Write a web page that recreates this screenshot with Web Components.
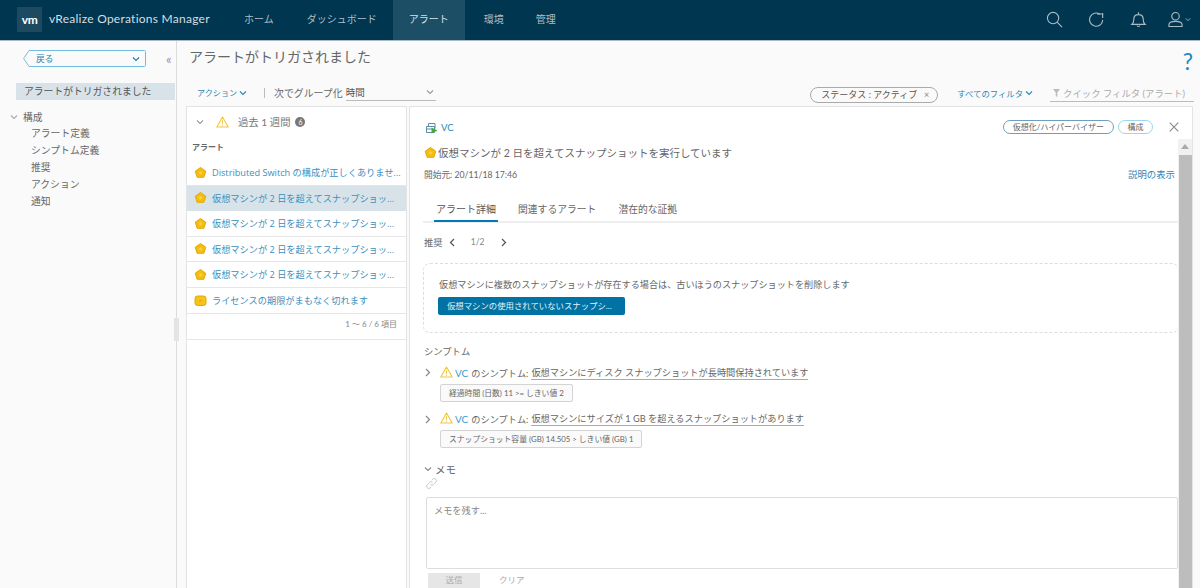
<!DOCTYPE html>
<html lang="ja">
<head>
<meta charset="utf-8">
<title>vRealize Operations Manager</title>
<style>
  html, body { margin: 0; height: 588px; overflow: hidden; }
  body {
    font-family: "Lato", "Noto Sans CJK JP", sans-serif;
    color: #666;
    background: #fafafa;
    display: flex;
    flex-direction: column;
    width: 1200px;
  }
  .page { display: flex; flex: 1; min-height: 0; }
</style>
</head>
<body>
<app-header></app-header>
<div class="page">
  <app-sidebar></app-sidebar>
  <app-main></app-main>
</div>

<script>
const ICONS = {
  star: `<svg width="13" height="13" viewBox="0 0 13 13"><path d="M6.5 1.500 11.800 5.300 9.800 11.300H3.200L1.200 5.300z" fill="#f5bd12" stroke="#e3a900" stroke-width="1" stroke-linejoin="round"/><circle cx="6.500" cy="6.800" r="1.600" fill="#fad447"/></svg>`,
  square: `<svg width="13" height="13" viewBox="0 0 13 13"><rect x="1" y="2" width="11" height="9.500" rx="2.500" fill="#f6c21c" stroke="#e5a800"/><rect x="5.400" y="6.200" width="2" height="1" fill="#d59a00"/></svg>`,
  warn: `<svg width="13" height="12" viewBox="0 0 13 12"><path d="M6.500 1 12.200 11H.8z" fill="#fff" stroke="#f3c53c" stroke-width="1.100" stroke-linejoin="round"/><path d="M6.500 4.200v3.600M6.500 8.800v1" stroke="#f3c53c" stroke-width="1"/></svg>`,
  chevDown: `<svg width="8" height="6" viewBox="0 0 8 6"><path d="M1 1.500 4 4.500 7 1.500" fill="none" stroke="currentColor" stroke-width="1.100"/></svg>`,
  chevRight: `<svg width="6" height="9" viewBox="0 0 6 9"><path d="M1 1l3.500 3.500L1 8" fill="none" stroke="currentColor" stroke-width="1.200"/></svg>`,
  chevLeft: `<svg width="6" height="9" viewBox="0 0 6 9"><path d="M5 1 1.500 4.500 5 8" fill="none" stroke="currentColor" stroke-width="1.200"/></svg>`
};

class AppHeader extends HTMLElement {
  connectedCallback() {
    this.attachShadow({ mode: 'open' }).innerHTML = `
    <style>
      :host { display: flex; height: 40px; background: #00364f; border-bottom: 1px solid #a9bcc6; box-sizing: content-box; align-items: stretch; color: #a9bcc6; flex: none; }
      .logo { width: 25px; height: 25px; margin: 7px 7px 0 17px; background: #1d4a60; color: #fff; font: 700 12px "Lato", sans-serif; display: flex; align-items: center; justify-content: center; letter-spacing: -.5px; }
      .name { width: 178px; font-size: 12px; letter-spacing: .25px; color: #d6dfe4; line-height: 37px; white-space: nowrap; }
      nav { display: flex; }
      nav a { font-size: 10px; padding: 0 16px; line-height: 39px; color: #aebfc8; white-space: nowrap; }
      nav a.on { background: #1c4f66; color: #d9e2e7; }
      nav a:first-child { padding-left: 0; padding-right: 17px; margin-left: 17px; }
      nav a:nth-child(3) { margin: 0 3px 0 0; }
      .tools { margin-left: auto; display: flex; align-items: center; gap: 25px; padding: 0 9px 2px 0; }
      svg { display: block; fill: none; stroke: currentColor; stroke-width: 1.200; }
      .bell { margin-right: -4px; }
      .user { display: flex; align-items: center; gap: 2px; }
    </style>
    <div class="logo">vm</div>
    <div class="name">vRealize Operations Manager</div>
    <nav><a>ホーム</a><a>ダッシュボード</a><a class="on">アラート</a><a>環境</a><a>管理</a></nav>
    <div class="tools">
      <svg width="17" height="17" viewBox="0 0 18 18"><circle cx="7.500" cy="7.500" r="6"/><path d="M12 12l5 5"/></svg>
      <svg width="17" height="17" viewBox="0 0 18 18"><path d="M15.600 9.500A7 7 0 1 1 12.600 3.400"/><path d="M9.500 3.200h6V2M15.500 2v5.400"/></svg>
      <svg class="bell" width="17" height="17" viewBox="0 0 18 18"><path d="M2 14.200c1.600-1.300 2-2.600 2-5.200 0-3 2-5.200 5-5.200s5 2.200 5 5.200c0 2.600.4 3.900 2 5.200zM9 1.200v2.400M7.600 15.400c.2 1.400 2.600 1.400 2.800 0"/></svg>
      <div class="user">
        <svg width="15" height="17" viewBox="0 0 16 18"><circle cx="8" cy="5.500" r="4"/><path d="M1 16.500v-2c0-2.200 3-3.500 7-3.500s7 1.300 7 3.500v2z"/></svg>
        <svg width="6" height="5" viewBox="0 0 8 6"><path d="M1 1.500 4 4.500 7 1.500"/></svg>
      </div>
    </div>`;
  }
}

class AppSidebar extends HTMLElement {
  connectedCallback() {
    this.attachShadow({ mode: 'open' }).innerHTML = `
    <style>
      :host { display: block; position: relative; width: 176px; flex: none; border-right: 1px solid #dcdcdc; background: #fafafa; font-size: 9.800px; color: #666; }
      .top { display: flex; align-items: center; margin: 9px 0 0 23px; }
      .back { position: relative; width: 123px; height: 17px; display: flex; align-items: center; justify-content: space-between; padding: 0 6px 0 13px; box-sizing: border-box; font-size: 8.700px; color: #1f7fb0; }
      .back > svg:first-child { position: absolute; left: 0; top: 0; color: #74bbe0; }
      .back svg { color: #1f7fb0; }
      .collapse { margin-left: 20px; color: #999; font-size: 13px; line-height: 14px; }
      .current { margin: 16px 1px 0 16px; height: 17px; line-height: 17px; padding-left: 8px; background: #d8e3e9; color: #555; white-space: nowrap; }
      .group { display: flex; align-items: center; height: 17px; margin-top: 8px; }
      .group svg { margin: 0 5px 0 10px; color: #aaa; }
      .sub { padding-left: 31px; line-height: 17px; }
      .grip { position: absolute; right: -3px; top: 277px; width: 5px; height: 23px; background: #e4e4e4; }
    </style>
    <div class="top">
      <div class="back">
        <svg width="123" height="17" viewBox="0 0 123 17" fill="none" stroke="currentColor"><path d="M.6 8.500 6 .5h115.500a1 1 0 0 1 1 1v14a1 1 0 0 1-1 1H6z"/></svg>
        <span>戻る</span>${ICONS.chevDown}
      </div>
      <div class="collapse">«</div>
    </div>
    <div class="current">アラートがトリガされました</div>
    <div class="group">${ICONS.chevDown}<span>構成</span></div>
    <div class="sub">アラート定義</div>
    <div class="sub">シンプトム定義</div>
    <div class="sub">推奨</div>
    <div class="sub">アクション</div>
    <div class="sub">通知</div>
    <div class="grip"></div>`;
  }
}

class AppMain extends HTMLElement {
  connectedCallback() {
    this.attachShadow({ mode: 'open' }).innerHTML = `
    <style>
      :host { display: flex; flex-direction: column; flex: 1; min-width: 0; }
      .title { display: flex; justify-content: space-between; padding: 6px 7px 0 12px; height: 29px; font-size: 14px; color: #666; box-sizing: border-box; line-height: 20px; flex: none; }
      .help { font-size: 23px; color: #1f87c0; line-height: 22px; margin-top: 3px; }
      .panels { display: flex; gap: 2px; padding: 0 7px 0 9px; flex: 1; min-height: 0; }
    </style>
    <div class="title"><span>アラートがトリガされました</span><span class="help">?</span></div>
    <alert-toolbar></alert-toolbar>
    <div class="panels">
      <alert-list></alert-list>
      <alert-detail></alert-detail>
    </div>`;
  }
}

class AlertToolbar extends HTMLElement {
  connectedCallback() {
    this.attachShadow({ mode: 'open' }).innerHTML = `
    <style>
      :host { display: flex; align-items: center; height: 36px; padding: 9px 6px 0 20px; box-sizing: border-box; font-size: 9.500px; color: #666; flex: none; white-space: nowrap; }
      .link { color: #2f86b5; font-size: 8.100px; display: flex; align-items: center; gap: 2px; }
      .sep { width: 1px; height: 10px; background: #bbb; margin: 0 9px 0 17px; }
      .group { font-size: 9.900px; }
      .select { width: 90px; height: 17px; margin-left: 3px; box-sizing: border-box; border-bottom: 1px solid #bbb; display: flex; justify-content: space-between; align-items: center; padding-right: 2px; font-size: 9.500px; color: #555; }
      .select svg { color: #999; }
      .pill { margin: 4px 0 0 auto; width: 128px; height: 16px; box-sizing: border-box; border: 1px solid #aaa; border-radius: 8px; display: flex; justify-content: space-between; align-items: center; padding: 0 8px 0 10px; font-size: 9px; color: #555; }
      .pill i { font-style: normal; color: #888; font-size: 9px; }
      .all { margin: 1px 17px 0 19px; font-size: 8.350px; }
      .quick { margin-top: 2px; width: 144px; height: 17px; box-sizing: border-box; border-bottom: 1px solid #bbb; color: #aaa; font-size: 9.400px; display: flex; align-items: center; gap: 3px; padding-left: 3px; }
    </style>
    <span class="link">アクション ${ICONS.chevDown}</span>
    <span class="sep"></span>
    <span class="group">次でグループ化</span>
    <div class="select"><span>時間</span>${ICONS.chevDown}</div>
    <div class="pill"><span>ステータス : アクティブ</span><i>×</i></div>
    <span class="link all">すべてのフィルタ ${ICONS.chevDown}</span>
    <div class="quick"><svg width="7" height="8" viewBox="0 0 7 8"><path d="M0 0h7L4.300 3.500V8L2.700 7V3.500z" fill="#bbb"/></svg><span>クイック フィルタ (アラート)</span></div>`;
  }
}

class AlertRow extends HTMLElement {
  connectedCallback() {
    const icon = this.getAttribute('icon') || 'star';
    this.attachShadow({ mode: 'open' }).innerHTML = `
    <style>
      :host { display: flex; align-items: center; height: 25.500px; box-sizing: border-box; border-bottom: 1px solid #e6e6e6; padding: 0 4px 0 7px; gap: 5px; font-family: "Open Sans", "Noto Sans CJK JP", sans-serif; font-size: 9.200px; color: #3b8fbd; white-space: nowrap; background: #fff; }
      :host([selected]) { background: #d8e3e9; border-bottom-color: #d8e3e9; }
      :host([plain]) { border-bottom: 0; }
      svg { display: block; flex: none; }
    </style>
    ${ICONS[icon]}<span><slot></slot></span>`;
  }
}

class AlertList extends HTMLElement {
  connectedCallback() {
    this.attachShadow({ mode: 'open' }).innerHTML = `
    <style>
      :host { display: block; width: 219px; flex: none; background: #fff; border: 1px solid #e4e4e4; border-bottom: 0; box-sizing: content-box; font-size: 10px; }
      .head { display: flex; align-items: center; height: 29px; padding: 0 0 0 9px; font-size: 10.300px; color: #777; }
      .head .c { color: #999; margin-right: 12px; display: flex; }
      .head svg { display: block; }
      .head .t { margin-left: 9px; }
      .badge { width: 10px; height: 10px; margin-left: 5px; border-radius: 50%; background: #777; color: #fff; font-size: 7px; line-height: 10px; text-align: center; }
      .col { font-size: 8px; font-weight: 700; color: #666; padding: 4px 0 0 5px; height: 24px; box-sizing: border-box; line-height: 14px; }
      .rows { height: 153px; overflow: hidden; }
      .foot { font-size: 8px; color: #888; text-align: right; padding-right: 9px; height: 27px; line-height: 21px; border-bottom: 1px solid #e6e6e6; border-top: 1px solid #e6e6e6; box-sizing: border-box; }
    </style>
    <div class="head"><span class="c">${ICONS.chevDown}</span>${ICONS.warn}<span class="t">過去 1 週間</span><span class="badge">6</span></div>
    <div class="col">アラート</div>
    <div class="rows">
      <alert-row>Distributed Switch の構成が正しくありませ...</alert-row>
      <alert-row selected>仮想マシンが 2 日を超えてスナップショッ...</alert-row>
      <alert-row>仮想マシンが 2 日を超えてスナップショッ...</alert-row>
      <alert-row>仮想マシンが 2 日を超えてスナップショッ...</alert-row>
      <alert-row>仮想マシンが 2 日を超えてスナップショッ...</alert-row>
      <alert-row icon="square" plain>ライセンスの期限がまもなく切れます</alert-row>
    </div>
    <div class="foot">1 〜 6 / 6 項目</div>`;
  }
}

class SymptomRow extends HTMLElement {
  connectedCallback() {
    this.attachShadow({ mode: 'open' }).innerHTML = `
    <style>
      :host { display: block; font-size: 9.200px; color: #666; margin-bottom: 9px; }
      .line { display: flex; align-items: center; height: 17px; white-space: nowrap; }
      .line > svg:first-child { color: #888; margin: 0 9px 0 1px; }
      .warn { margin-right: 2px; }
      .vc { color: #3b9bcc; margin-right: 3px; font-size: 10px; }
      u { text-decoration: none; border-bottom: 1px solid #aaa; margin-left: 3px; line-height: 13px; }
      .val { height: 18px; width: fit-content; line-height: 16px; box-sizing: border-box; margin: 2.500px 0 0 16px; padding: 0 8px; border: 1px solid #d4d4d4; border-radius: 2px; background: #fafafa; font-size: 7.800px; color: #666; }
    </style>
    <div class="line">${ICONS.chevRight}<span class="warn">${ICONS.warn}</span><span class="vc">VC</span><span>のシンプトム:</span><u><slot></slot></u></div>
    <div class="val"><slot name="value"></slot></div>`;
  }
}

class AlertDetail extends HTMLElement {
  connectedCallback() {
    this.attachShadow({ mode: 'open' }).innerHTML = `
    <style>
      :host { display: flex; flex-direction: column; flex: 1; min-width: 0; background: #fff; border: 1px solid #e4e4e4; border-bottom: 0; font-size: 10px; color: #666; overflow: hidden; }
      .top { display: flex; align-items: flex-start; height: 32px; padding: 13px 0 0 15px; box-sizing: border-box; flex: none; }
      .vc { display: flex; align-items: center; gap: 3px; color: #2f86b5; font-size: 9.500px; height: 14px; }
      .tags { margin-left: auto; display: flex; gap: 4px; align-items: center; }
      .tag { height: 14px; line-height: 12px; box-sizing: border-box; border: 1px solid #6d9fbc; border-radius: 7px; padding: 0 9px; font-size: 8px; color: #666; }
      .tag.light { border-color: #9dd6ee; padding: 0 8.500px; }
      .x { margin: 0 13px 0 12px; color: #888; display: block; }
      .wrap { display: flex; flex: 1; min-height: 0; }
      .body { flex: 1; min-width: 0; padding: 3px 0 0 14px; }
      .bar { width: 14px; flex: none; background: #f1f1f1; display: flex; flex-direction: column; align-items: center; }
      .bar i { border: 4px solid transparent; border-top: 0; border-bottom: 5px solid #aaa; margin: 5px 0 6px; }
      .bar b { display: block; width: 13px; flex: 1; background: #bdbdbd; }
      h2 { margin: 0; font-weight: 400; font-size: 10.500px; display: flex; align-items: center; gap: 1px; height: 20px; color: #666; }
      .since { display: flex; justify-content: space-between; margin-top: 5px; font-size: 8.700px; height: 16px; line-height: 16px; padding-right: 3px; }
      .since a { color: #2f86b5; font-size: 9.400px; }
      .tabs { display: flex; margin: 17px 0 0 -1px; height: 23px; border-bottom: 2px solid #eee; box-sizing: border-box; font-size: 9.800px; }
      .tabs a { margin: 0 22px 0 0; line-height: 18px; white-space: nowrap; }
      .tabs a:first-child { color: #555; font-size: 10px; border-bottom: 2px solid #0079b8; height: 22px; box-sizing: border-box; padding: 0 2px; margin: 0 20px 0 11px; }
      .rec { display: flex; align-items: center; height: 20px; margin-top: 9px; font-size: 9.300px; }
      .rec svg { color: #555; }
      .rec span { width: 30px; text-align: center; font-size: 8.500px; color: #888; margin: 0 8px; }
      .rec em { font-style: normal; margin-right: 6px; }
      .card { height: 70px; margin: 11px -1px 0; border: 1px dashed #ddd; border-radius: 7px; padding: 14px 0 0 14px; box-sizing: border-box; }
      .card p { margin: 0 0 0 1px; font-size: 9.150px; line-height: 13px; }
      .btn { width: 187px; height: 18px; margin-top: 6px; line-height: 18px; background: #0072a3; color: #e8f3f8; border-radius: 2px; font-size: 8.400px; padding-left: 9px; box-sizing: border-box; white-space: nowrap; overflow: hidden; }
      .sec { font-size: 9.300px; height: 14px; line-height: 14px; margin: 12px 0 5px; }
      .memo { display: flex; align-items: center; gap: 3px; font-size: 10.500px; height: 14px; margin-top: 14px; }
      .memo svg { color: #888; }
      .link { display: block; margin: 1px 0 0 1px; color: #c8c8c8; }
      textarea { display: block; width: 752px; height: 72px; margin: 7px 0 0 2px; box-sizing: border-box; resize: none; border: 1px solid #ddd; border-radius: 2px; padding: 5px 7px; font: 9.200px "Lato", "Noto Sans CJK JP", sans-serif; outline: 0; }
      textarea::placeholder { color: #888; }
      .actions { display: flex; margin: 4px 0 0 4px; font-size: 8.500px; color: #aaa; }
      .send { width: 52px; height: 15px; background: #e6e6e6; text-align: center; line-height: 15px; }
      .clear { margin-left: 19px; line-height: 15px; }
    </style>
    <div class="top">
      <div class="vc">
        <svg width="13" height="13" viewBox="0 0 13 13" fill="none" stroke="#5d8da6"><path d="M1.500 5.500h8v6h-8zM1.500 8h6M3.500 5.500v-3h6.500v5"/><path d="M6.500 6.500l6 3-6 3z" fill="#4aa63c" stroke="none"/></svg>
        <span>VC</span>
      </div>
      <div class="tags">
        <span class="tag">仮想化/ハイパーバイザー</span><span class="tag light">構成</span>
        <svg class="x" width="10" height="10" viewBox="0 0 10 10"><path d="M.7.700l8.600 8.600M9.300.700.700 9.300" stroke="currentColor" stroke-width="1.100"/></svg>
      </div>
    </div>
    <div class="wrap">
      <div class="body">
        <h2>${ICONS.star}<span>仮想マシンが 2 日を超えてスナップショットを実行しています</span></h2>
        <div class="since"><span>開始元: 20/11/18 17:46</span><a>説明の表示</a></div>
        <div class="tabs"><a>アラート詳細</a><a>関連するアラート</a><a>潜在的な証拠</a></div>
        <div class="rec"><em>推奨</em>${ICONS.chevLeft}<span>1/2</span>${ICONS.chevRight}</div>
        <div class="card">
          <p>仮想マシンに複数のスナップショットが存在する場合は、古いほうのスナップショットを削除します</p>
          <div class="btn">仮想マシンの使用されていないスナップシ...</div>
        </div>
        <div class="sec">シンプトム</div>
        <symptom-row>仮想マシンにディスク スナップショットが長時間保持されています<span slot="value">経過時間 (日数) 11 &gt;= しきい値 2</span></symptom-row>
        <symptom-row>仮想マシンにサイズが 1 GB を超えるスナップショットがあります<span slot="value">スナップショット容量 (GB) 14.505 &gt; しきい値 (GB) 1</span></symptom-row>
        <div class="memo">${ICONS.chevDown}<span>メモ</span></div>
        <svg class="link" width="13" height="13" viewBox="0 0 13 13" fill="none" stroke="currentColor"><path d="M5.500 7.500a2.200 2.200 0 0 0 3.100 0l2.300-2.300a2.200 2.200 0 0 0-3.100-3.100L6.700 3.200M7.500 5.500a2.200 2.200 0 0 0-3.100 0L2.100 7.800a2.200 2.200 0 0 0 3.100 3.100l1.100-1.100"/></svg>
        <textarea placeholder="メモを残す..."></textarea>
        <div class="actions"><span class="send">送信</span><span class="clear">クリア</span></div>
      </div>
      <div class="bar"><i></i><b></b></div>
    </div>`;
  }
}

customElements.define('app-header', AppHeader);
customElements.define('app-sidebar', AppSidebar);
customElements.define('app-main', AppMain);
customElements.define('alert-toolbar', AlertToolbar);
customElements.define('alert-row', AlertRow);
customElements.define('alert-list', AlertList);
customElements.define('symptom-row', SymptomRow);
customElements.define('alert-detail', AlertDetail);
</script>
</body>
</html>
